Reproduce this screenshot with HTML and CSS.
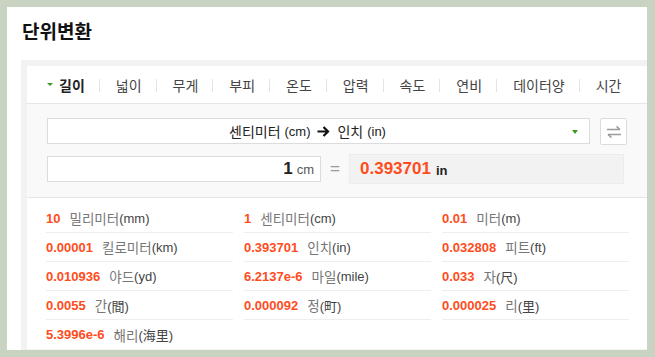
FILE: index.html
```html
<!DOCTYPE html>
<html lang="ko">
<head>
<meta charset="utf-8">
<link rel="stylesheet" href="styles.css">
</head>
<body>
<div class="panel">
  <h2 class="title">단위변환</h2>
  <div class="box">
    <div class="tabs">
      <a class="tab active"><span class="tri"></span>길이</a>
      <a class="tab">넓이</a>
      <a class="tab">무게</a>
      <a class="tab">부피</a>
      <a class="tab">온도</a>
      <a class="tab">압력</a>
      <a class="tab">속도</a>
      <a class="tab">연비</a>
      <a class="tab">데이터양</a>
      <a class="tab">시간</a>
    </div>
    <div class="form">
      <div class="select-row">
        <div class="select">
          <span class="sel-text">센티미터 <span class="u">(cm)</span><svg class="arrow" width="13" height="11" viewBox="0 0 13 11"><path d="M0.5 5.5H11M6.5 1L11 5.5L6.5 10" stroke="#111" stroke-width="2.2" fill="none"/></svg>인치 <span class="u">(in)</span></span>
          <span class="sel-tri"></span>
        </div>
        <button class="swap">
          <svg width="16" height="12" viewBox="0 0 16 12"><path d="M1 3.5H14M10.5 0.5L14 3.5" stroke="#9a9a9a" stroke-width="1.6" fill="none"/><path d="M15 8.5H2M5.5 11.5L2 8.5" stroke="#9a9a9a" stroke-width="1.6" fill="none"/></svg>
        </button>
      </div>
      <div class="calc-row">
        <div class="input"><b class="num">1</b><span class="unit">cm</span></div>
        <span class="eq">=</span>
        <div class="result"><b class="rnum">0.393701</b><b class="runit">in</b></div>
      </div>
    </div>
    <div class="list">
      <div class="item"><b>10</b><span class="nm">밀리미터</span><span class="pu">(mm)</span></div>
      <div class="item"><b>1</b><span class="nm">센티미터</span><span class="pu">(cm)</span></div>
      <div class="item"><b>0.01</b><span class="nm">미터</span><span class="pu">(m)</span></div>
      <div class="item"><b>0.00001</b><span class="nm">킬로미터</span><span class="pu">(km)</span></div>
      <div class="item"><b>0.393701</b><span class="nm">인치</span><span class="pu">(in)</span></div>
      <div class="item"><b>0.032808</b><span class="nm">피트</span><span class="pu">(ft)</span></div>
      <div class="item"><b>0.010936</b><span class="nm">야드</span><span class="pu">(yd)</span></div>
      <div class="item"><b>6.2137e-6</b><span class="nm">마일</span><span class="pu">(mile)</span></div>
      <div class="item"><b>0.033</b><span class="nm">자</span><span class="pu">(尺)</span></div>
      <div class="item"><b>0.0055</b><span class="nm">간</span><span class="pu">(間)</span></div>
      <div class="item"><b>0.000092</b><span class="nm">정</span><span class="pu">(町)</span></div>
      <div class="item"><b>0.000025</b><span class="nm">리</span><span class="pu">(里)</span></div>
      <div class="item last"><b>5.3996e-6</b><span class="nm">해리</span><span class="pu">(海里)</span></div>
    </div>
  </div>
</div>
</body>
</html>
```
FILE: styles.css
```css
html, body {
  margin: 0;
  padding: 0;
}
body {
  background: #c9d3c2;
  font-family: "Liberation Sans", "Noto Sans CJK KR", sans-serif;
  color: #333;
  width: 655px;
  height: 357px;
  overflow: hidden;
}
.panel {
  margin: 7px 8px 0 7px;
  background: #fff;
  height: 343px;
  padding: 12px 0 0 14px;
  box-sizing: border-box;
  overflow: hidden;
}
.title {
  margin: 0 0 17px 1px;
  font-size: 19px;
  line-height: 24px;
  font-weight: bold;
  color: #111;
  font-family: "Noto Sans CJK KR", sans-serif;
}
.box {
  background: #f2f2f2;
  padding: 6px 0 0 6px;
  height: 400px;
}
.tabs {
  background: #fff;
  height: 37px;
  border-bottom: 1px solid #e6e6e6;
  display: flex;
  align-items: center;
  padding-left: 20px;
}
.tab {
  font-family: "Noto Sans CJK KR", sans-serif;
  font-size: 14px;
  color: #444;
  padding: 0 14px 0 17px;
  position: relative;
  line-height: 16px;
}
.tab + .tab::before {
  content: "";
  position: absolute;
  left: 0;
  top: 2px;
  width: 1px;
  height: 13px;
  background: #e3e3e3;
}
.tab.active {
  padding-left: 0;
  font-weight: bold;
  color: #222;
  display: flex;
  align-items: center;
}
.tri {
  display: inline-block;
  width: 0;
  height: 0;
  border-left: 3px solid transparent;
  border-right: 3px solid transparent;
  border-top: 3px solid #3e9a1e;
  margin-right: 6px;
}
.form {
  background: #f9f9f9;
  padding: 14px 20px 13px 20px;
  border-bottom: 1px solid #e6e6e6;
}
.select-row {
  display: flex;
  gap: 10px;
}
.select {
  flex: 0 0 543px;
  height: 26px;
  box-sizing: border-box;
  border: 1px solid #dcdcdc;
  background: #fff;
  display: flex;
  align-items: center;
  justify-content: center;
  position: relative;
  padding-right: 22px;
}
.sel-text {
  font-family: "Noto Sans CJK KR", sans-serif;
  font-size: 14px;
  color: #222;
  display: flex;
  align-items: center;
  white-space: pre;
}
.sel-text .u {
  font-family: "Liberation Sans", sans-serif;
  font-size: 13px;
}
.arrow {
  margin: 0 7px 0 7px;
}
.sel-tri {
  position: absolute;
  right: 11px;
  top: 11px;
  width: 0;
  height: 0;
  border-left: 3px solid transparent;
  border-right: 3px solid transparent;
  border-top: 4px solid #3e9a1e;
}
.swap {
  width: 27px;
  height: 27px;
  box-sizing: border-box;
  border: 1px solid #dcdcdc;
  border-radius: 2px;
  background: #fff;
  padding: 0;
  display: flex;
  align-items: center;
  justify-content: center;
}
.calc-row {
  display: flex;
  align-items: center;
  margin-top: 9px;
}
.input {
  width: 274px;
  height: 26px;
  box-sizing: border-box;
  border: 1px solid #dcdcdc;
  background: #fff;
  display: flex;
  align-items: center;
  justify-content: flex-end;
  padding-right: 6px;
}
.num {
  font-size: 17px;
  color: #222;
  margin-right: 4px;
}
.unit {
  font-size: 13px;
  color: #555;
}
.eq {
  width: 28px;
  text-align: center;
  font-size: 17px;
  color: #999;
}
.result {
  width: 275px;
  height: 30px;
  box-sizing: border-box;
  background: #f2f2f2;
  border: 1px solid #ececec;
  display: flex;
  align-items: center;
  padding-left: 10px;
}
.rnum {
  font-size: 17px;
  color: #ff4c1c;
  margin-right: 5px;
}
.runit {
  font-size: 13px;
  color: #222;
  margin-top: 3px;
}
.list {
  background: #fff;
  padding: 6px 0 0 19px;
  display: grid;
  grid-template-columns: repeat(3, 187px);
  column-gap: 11px;
}
.item {
  height: 29px;
  box-sizing: border-box;
  border-bottom: 1px solid #eeeeee;
  display: flex;
  align-items: center;
  font-size: 13px;
}
.item.last {
  border-bottom: none;
}
.item b {
  color: #ff4c1c;
  font-size: 13px;
  margin-right: 9px;
}
.nm {
  font-family: "Noto Sans CJK KR", sans-serif;
  color: #777;
  font-size: 13.5px;
}
.pu {
  color: #444;
  font-size: 13px;
  font-family: "Liberation Sans", "Noto Sans CJK KR", sans-serif;
}
```
